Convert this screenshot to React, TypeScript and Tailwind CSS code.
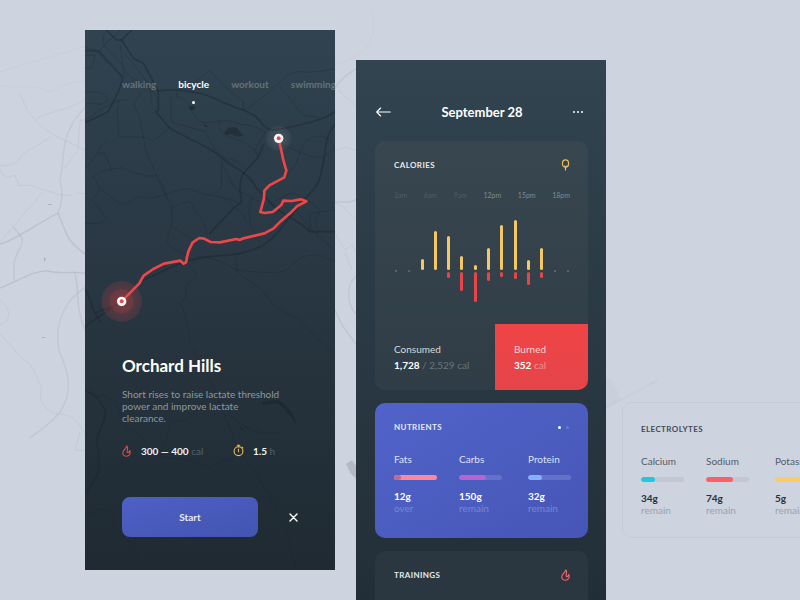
import React from "react";

function Flame({ className }: { className: string }) {
  return (
    <svg viewBox="0 0 9 12" className={className} fill="none" stroke="currentColor" strokeWidth="1.1" strokeLinejoin="round" aria-hidden="true">
      <path d="M4.8 .9C4.3 3 2.6 4 1.5 5.7C0 8.2 1.2 11.2 4.3 11.3C7.3 11.3 8.9 8.6 7.8 5.4C7.5 6.8 6.9 7.6 6 7.6C4.9 7.5 5 6.4 5.3 5.2C5.7 3.6 5.6 2.1 4.8 .9Z" />
    </svg>
  );
}

function Timer() {
  return (
    <svg viewBox="0 0 11 13" className="h-[13px] w-[11px] text-[#eebd5b]" fill="none" stroke="currentColor" strokeWidth="1.1" aria-hidden="true">
      <circle cx="5.5" cy="7.2" r="4.4" />
      <path d="M4.3 1.3H6.7M5.5 1.3V2.8M5.5 5V7.8M9 3.2L9.8 4" strokeLinecap="round" />
    </svg>
  );
}

function Pin() {
  return (
    <svg viewBox="0 0 9 12" className="h-3 w-[9px] text-[#eebd5b]" fill="none" stroke="currentColor" strokeWidth="1.2" strokeLinecap="round" aria-hidden="true">
      <ellipse cx="4.5" cy="4.5" rx="3.1" ry="3.7" />
      <path d="M4.5 8.2V11M3.6 7.2L4.5 8.2L5.4 7.2" />
    </svg>
  );
}

const minorRoads = [
  "M60 90C80 60 110 50 120 30M15 82C50 90 60 100 80 130M75 40C50 80 110 100 135 150C160 190 190 180 235 235M120 70L132 165M132 100C160 130 180 160 200 185C210 200 215 220 212 250",
  "M15 105H45C40 130 45 150 15 145M15 218C60 210 90 230 80 245C60 265 30 240 15 252M15 300C60 270 100 240 140 238M185 212L162 252L180 300L190 350L220 362L268 325M115 240L112 285L116 350L190 352",
  "M15 440C30 450 60 370 80 362M190 352L200 400L262 540M55 398L75 400L95 452M40 470C60 450 90 448 125 443C160 455 195 475 232 467M40 470L60 505L37 540L80 595L60 610H15M60 505C80 520 110 548 130 552C160 545 165 530 185 528C220 550 280 505 330 506C370 530 440 525 485 555",
  "M270 230C280 250 265 290 278 308C330 320 350 330 370 332C390 350 400 395 428 410C455 420 470 415 490 445M290 218V230C340 235 330 300 370 308C460 300 440 300 470 310L525 320L560 338M415 303C415 350 450 350 478 362C500 370 520 380 530 405M555 338L525 388L535 412",
  "M340 190L390 151L425 192L490 245V270M490 270C520 260 540 235 570 215C600 180 630 155 660 155C700 160 730 150 764 147M600 202L640 245C660 290 680 290 708 290L715 300M764 385C740 330 700 350 680 360C650 400 655 440 632 450M600 375C650 385 690 420 730 412C745 400 755 390 764 385M632 450C610 490 590 490 568 496M425 415V500L405 520",
  "M240 480L275 560V615C265 635 260 660 265 675C285 690 305 700 325 710M275 565C310 545 330 540 335 548C345 590 370 580 380 640M275 620C300 630 320 650 340 660M425 430C440 450 450 490 470 510C500 520 520 540 550 550M440 540C450 560 490 570 500 605M515 535C505 560 505 590 515 620L540 670",
  "M560 560C590 540 620 520 640 520C680 540 715 555 718 580C700 600 710 625 715 650M690 635L690 580L764 570M640 560C680 610 700 640 740 670L764 690M350 710C390 710 430 725 470 750C520 755 560 760 600 757C640 750 640 710 690 706H720L764 725M470 750L468 715L485 700",
  "M470 750C500 790 540 790 565 835C590 870 620 885 655 892C680 930 720 960 764 1005M320 720L348 765C320 790 320 800 316 830L303 848L316 890L330 950C327 970 345 990 350 1010C380 1060 400 1090 420 1150L470 1280C520 1350 560 1410 580 1450C610 1500 630 1580 650 1650",
  "M45 1135L70 1125L95 1140C130 1170 130 1230 160 1235C195 1240 190 1290 240 1308C290 1320 340 1315 390 1345L420 1325L460 1315M240 1308L275 1205L320 1200L370 1150M430 1160C450 1200 530 1245 570 1240L598 1235M15 1480H35L60 1465L95 1480C100 1540 150 1550 170 1600L200 1650",
];

const mainRoads = [
  "M125 60L160 115L190 130C210 165 225 195 235 215V270L228 276L270 325C310 350 380 375 425 412C465 450 500 450 530 505L560 535C590 580 660 600 690 635H764",
  "M78 30L110 60H125L155 30M235 213C290 205 330 215 370 222C420 240 450 260 490 270C520 285 535 290 548 315L570 330C600 330 620 325 660 315C700 305 740 295 764 275",
  "M15 92H55L90 130L128 172C120 220 95 250 85 275L15 308M550 375L535 412L490 460C475 490 480 520 485 545L460 565L390 640M764 315C730 350 740 400 725 450C715 510 700 500 640 580C590 635 580 680 480 700C430 710 370 705 320 725C280 735 230 765 190 780C160 800 130 840 100 860L15 920",
  "M15 810C40 840 30 860 45 880L60 905M45 880L95 860M15 1110L50 1130L78 1175C70 1230 40 1240 55 1290V1360L15 1425",
];

function TrailMap() {
  return (
    <svg viewBox="85 30 250 540" preserveAspectRatio="xMidYMin slice" className="absolute inset-0 h-full w-full" role="img" aria-label="Trail map">
      <defs>
        <radialGradient id="halo">
          <stop offset="0" stopColor="#ffffff" stopOpacity="0.14" />
          <stop offset="1" stopColor="#ffffff" stopOpacity="0.03" />
        </radialGradient>
        <radialGradient id="pulse">
          <stop offset="0" stopColor="#ef4444" stopOpacity="0.32" />
          <stop offset="1" stopColor="#ef4444" stopOpacity="0.14" />
        </radialGradient>
      </defs>
      <g transform="translate(80 20) scale(.33333)" fill="none" strokeLinejoin="round" strokeLinecap="round">
        <g stroke="#1b252d" strokeOpacity="0.28" strokeWidth="3">
          {minorRoads.map((d) => <path key={d} d={d} />)}
        </g>
        <g stroke="#18222a" strokeOpacity="0.4" strokeWidth="5">
          {mainRoads.map((d) => <path key={d} d={d} />)}
        </g>
        <g fill="#18222a" fillOpacity="0.5">
          <path d="M432 338L446 323L468 321L490 347L470 350L455 342L440 345Z" />
          <ellipse cx="336" cy="263" rx="9" ry="6" />
          <path d="M545 1145L595 1140C630 1160 645 1190 650 1215C625 1180 605 1158 590 1150L550 1155ZM475 1213L495 1235L485 1230ZM370 310L386 322L375 320Z" />
        </g>
        <circle cx="596" cy="355" r="38" fill="url(#halo)" />
        <circle cx="125" cy="844" r="61" fill="url(#pulse)" />
        <circle cx="125" cy="844" r="36" fill="#ef4444" fillOpacity="0.14" />
        <path
          d="M596 355L610 420L619 452L613 472L568 496L553 512L552 535L541 576L553 579L578 576L604 555L610 542L635 543L662 538L679 544L652 558L630 580L604 602L580 626L553 640L490 655L479 660L469 657L420 667L392 666L372 656L358 654L338 667L326 692L320 715L319 726L311 731L301 722L252 731L220 747L191 767L178 790L125 844"
          stroke="#ef4649"
          strokeWidth="8"
        />
        <g fill="#ffffff">
          <circle cx="596" cy="355" r="14" />
          <circle cx="125" cy="844" r="14" />
        </g>
        <g fill="#ef4649">
          <circle cx="596" cy="355" r="6" />
          <circle cx="125" cy="844" r="6" />
        </g>
      </g>
    </svg>
  );
}

function Backdrop() {
  return (
    <svg viewBox="0 0 800 600" preserveAspectRatio="xMinYMin slice" className="absolute inset-0 h-full w-full" aria-hidden="true">
      <g fill="none" stroke="#a9adb9">
        <g strokeOpacity="0.24">
          <path strokeOpacity="0.12" d="M0 72C30 62 60 55 88 45M0 85C20 90 30 82 50 92C65 85 75 80 88 82" />
          <path d="M20 93L27 110L37 122C50 137 70 140 90 154M0 166C25 165 15 155 35 147L52 136M37 119C50 110 80 110 90 92M0 170L5 178L15 175L19 186L30 185C45 190 60 197 72 195M63 170L78 150L80 120L90 120M75 193L90 194M43 192L0 242" />
          <path d="M0 300C10 308 13 320 0 325M0 334L22 358L31 365L42 388L40 397C45 410 50 413 60 414C75 415 80 425 86 435M80 432L75 450L86 450" />
          <path strokeOpacity="0.12" d="M334 65C350 60 385 50 370 5" />
          <path d="M334 152C345 145 350 148 358 152M338 90L358 108M334 232L345 250L352 245L358 255M345 252L352 270M334 202L345 208L355 220" />
        </g>
        <g strokeWidth="1.4" strokeOpacity="0.45">
          <path d="M0 244C15 240 35 225 58 213L64 228C70 245 80 250 90 258M0 288C20 280 35 270 48 271C65 275 75 270 90 274" />
          <path strokeOpacity="0.3" d="M58 213C63 200 63 190 60 180C64 160 62 145 70 128C75 118 82 110 90 102M90 285C60 300 55 330 59 350C67 370 75 390 60 412C50 425 40 430 30 438M334 90C340 78 350 72 358 68" />
          <path strokeOpacity="0.34" d="M13 227C30 245 20 240 14 263L14 280M75 272C80 300 75 300 82 322L90 342M334 202L350 202L358 199M334 308L342 325L358 347M358 275C345 282 346 308 358 315" />
        </g>
      </g>
      <path d="M346 464L352 460L358 469V480L351 474Z" fill="#aeb3be" fillOpacity="0.8" />
      <path d="M44 257L46 259L44 262ZM48 204H52V205H48ZM42 337H45V338H42Z" fill="#aeb3be" />
      <path d="M606 380L611 379L621 399L606 408Z" fill="#bcc4d0" fillOpacity="0.25" />
      <path d="M606 408C628 396 640 390 658 380" fill="none" stroke="#bcc4d0" strokeOpacity="0.3" strokeWidth="2" />
    </svg>
  );
}

const bars = [
  { hour: 3, up: 0, down: 0 },
  { hour: 4, up: 0, down: 0 },
  { hour: 5, up: 11, down: 0 },
  { hour: 6, up: 39, down: 0 },
  { hour: 7, up: 34, down: 6 },
  { hour: 8, up: 14, down: 19 },
  { hour: 9, up: 5, down: 30 },
  { hour: 10, up: 22, down: 9 },
  { hour: 11, up: 45, down: 5 },
  { hour: 12, up: 50, down: 7 },
  { hour: 13, up: 10, down: 13 },
  { hour: 14, up: 22, down: 6 },
  { hour: 15, up: 0, down: 0 },
  { hour: 16, up: 0, down: 0 },
];

function CalorieChart() {
  return (
    <div className="flex justify-between" role="img" aria-label="Calories by hour">
      {bars.map((bar) => (
        <div key={bar.hour} className="flex w-[3px] flex-col items-center">
          <div className="flex h-[51px] w-full items-end">
            <div className="w-full rounded-full bg-[#f5c765]" style={{ height: bar.up }} />
          </div>
          {bar.up === 0 ? (
            <div className="size-[2px] rounded-full bg-[#64717a]" />
          ) : (
            <div className="h-[2px]" />
          )}
          <div className="h-[30px] w-full">
            <div className="w-full rounded-full bg-[#ea4348]" style={{ height: bar.down }} />
          </div>
        </div>
      ))}
    </div>
  );
}

interface Level {
  name: string;
  amount: string;
  note: string;
  track: string;
  fill: string;
}

const nutrients: Level[] = [
  { name: "Fats", amount: "12g", note: "over", track: "bg-[#ff8799]", fill: "w-[7px] bg-[#bd6c90]" },
  { name: "Carbs", amount: "150g", note: "remain", track: "bg-[#6471c9]", fill: "w-[27px] bg-[#b863cf]" },
  { name: "Protein", amount: "32g", note: "remain", track: "bg-[#6471c9]", fill: "w-[14px] bg-[#83b3ff]" },
];

const electrolytes: Level[] = [
  { name: "Calcium", amount: "34g", note: "remain", track: "bg-[#c2c7d3]", fill: "w-[14px] bg-[#20c9dd]" },
  { name: "Sodium", amount: "74g", note: "remain", track: "bg-[#c2c7d3]", fill: "w-[27px] bg-[#fa6167]" },
  { name: "Potassium", amount: "5g", note: "remain", track: "bg-[#c2c7d3]", fill: "w-[43px] bg-[#fdcb66]" },
];

function Levels({ items, noteClass, amountClass, nameClass }: { items: Level[]; noteClass: string; amountClass: string; nameClass: string }) {
  return (
    <div className="mt-5 grid grid-cols-[65px_69px_auto]">
      {items.map((item) => (
        <div key={item.name} className="text-[10px] leading-3">
          <div className={nameClass}>{item.name}</div>
          <div className={`mt-[10px] h-[5px] w-[43px] overflow-hidden rounded-full ${item.track}`}>
            <div className={`h-full rounded-full ${item.fill}`} />
          </div>
          <div className={`mt-[10px] font-bold ${amountClass}`}>{item.amount}</div>
          <div className={noteClass}>{item.note}</div>
        </div>
      ))}
    </div>
  );
}

const hours = [
  { label: "3am", past: true },
  { label: "6am", past: true },
  { label: "9am", past: true },
  { label: "12pm", past: false },
  { label: "15pm", past: false },
  { label: "18pm", past: false },
];

const activities = ["walking", "bicycle", "workout", "swimming"];

function TrailScreen() {
  return (
    <section className="relative mt-[30px] flex h-[540px] w-[250px] shrink-0 flex-col overflow-hidden bg-linear-to-b from-[#304350] via-[#283641] to-[#1f2a32] pl-[37px]">
      <TrailMap />
      <nav className="relative mt-12 flex gap-[22px] text-[10px] leading-3 font-bold">
        {activities.map((name) => (
          <button key={name} className={name === "bicycle" ? "flex flex-col items-center text-white" : "flex flex-col items-center text-[#65727b]"}>
            {name}
            {name === "bicycle" && <span className="mt-[11px] size-[3px] rounded-full bg-white" />}
          </button>
        ))}
      </nav>
      <div className="relative mt-auto pb-[33px]">
        <h1 className="text-[17px] leading-5 font-bold text-white">Orchard Hills</h1>
        <p className="mt-3 w-[160px] text-[10px] leading-3 text-[#8f989e]">
          Short rises to raise lactate threshold power and improve lactate clearance.
        </p>
        <div className="mt-5 flex h-[13px] items-center text-[10px] leading-3 text-[#56626a]">
          <Flame className="h-3 w-[9px] text-[#e5484b]" />
          <span className="w-[93px] pl-[10px]"><b className="text-[#f2f4f5]">300 — 400</b> cal</span>
          <span className="ml-[9px]"><Timer /></span>
          <span className="pl-[9px]"><b className="text-[#f2f4f5]">1.5</b> h</span>
        </div>
        <div className="mt-10 flex items-center">
          <button className="h-10 w-[136px] rounded-lg bg-linear-to-br from-[#4e60c5] to-[#4354b1] text-[10px] font-bold text-[#e8eaf8]">Start</button>
          <button aria-label="Close" className="ml-[31px] size-[9px] text-white">
            <svg viewBox="0 0 9 9" fill="none" stroke="currentColor" strokeWidth="1.4" strokeLinecap="round"><path d="M1 1L8 8M8 1L1 8" /></svg>
          </button>
        </div>
      </div>
    </section>
  );
}

const cardTitle = "text-[8px] leading-3 font-bold tracking-[0.4px]";

function DayScreen() {
  return (
    <section className="relative mt-[60px] ml-[21px] flex h-[640px] w-[250px] shrink-0 flex-col bg-linear-to-b from-[#314450] via-[#25323c] via-70% to-[#1f2a32] pr-[18px] pl-[19px]">
      <header className="mt-[42px] flex h-5 items-center justify-between text-white">
        <button aria-label="Back" className="ml-px">
          <svg viewBox="0 0 15 10" className="h-[10px] w-[15px]" fill="none" stroke="currentColor" strokeWidth="1.1" strokeLinecap="round" strokeLinejoin="round"><path d="M14.3 5H.8M4.6 1L.7 5L4.6 9" /></svg>
        </button>
        <h2 className="text-[13px] leading-5 font-bold">September 28</h2>
        <button aria-label="More options" className="mr-[5px] flex gap-[2px]">
          <span className="size-[2px] rounded-full bg-white" />
          <span className="size-[2px] rounded-full bg-white" />
          <span className="size-[2px] rounded-full bg-white" />
        </button>
      </header>

      <article className="mt-[19px] overflow-hidden rounded-[10px] bg-linear-to-b from-[#38464f] to-[#303d46]">
        <div className="px-[18px] pt-[18px] pl-[19px]">
          <div className="flex items-center justify-between">
            <h3 className={`${cardTitle} text-[#e6e9eb]`}>CALORIES</h3>
            <Pin />
          </div>
          <div className="mt-[18px] flex justify-between text-[7px] leading-3">
            {hours.map((hour) => (
              <span key={hour.label} className={hour.past ? "text-[#4f5d66]" : "text-[#7f8a92]"}>{hour.label}</span>
            ))}
          </div>
          <div className="mt-[18px]">
            <CalorieChart />
          </div>
        </div>
        <div className="mt-[22px] flex text-[10px] leading-3">
          <div className="flex-1 pt-[19px] pb-[19px] pl-[19px] text-[#68757d]">
            <div className="text-[#d6dadc]">Consumed</div>
            <div className="mt-1"><b className="text-white">1,728</b> / 2,529 cal</div>
          </div>
          <div className="w-[93px] bg-linear-to-b from-[#f04446] to-[#e44549] pt-[19px] pb-[19px] pl-[19px] text-[#f49092]">
            <div className="text-[#fad4d4]">Burned</div>
            <div className="mt-1"><b className="text-white">352</b> cal</div>
          </div>
        </div>
      </article>

      <article className="mt-[13px] h-[135px] rounded-[10px] bg-linear-to-br from-[#5163ca] via-[#4c5dc0] to-[#4655b6] px-[19px] pt-[18px]">
        <div className="flex items-center justify-between">
          <h3 className={`${cardTitle} text-[#e6e9fa]`}>NUTRIENTS</h3>
          <div className="flex gap-[5px] text-white">
            <span className="size-[3px] rounded-full bg-white" />
            <span className="size-[3px] rounded-full bg-[#6b78d0]" />
          </div>
        </div>
        <Levels items={nutrients} nameClass="text-[#dfe3f8]" amountClass="text-white" noteClass="text-[#7986d4]" />
      </article>

      <article className="mt-[13px] flex-1 rounded-t-[10px] bg-[#2b3740] px-[18px] pt-[18px] pl-[19px]">
        <div className="flex items-center justify-between">
          <h3 className={`${cardTitle} text-[#e6e9eb]`}>TRAININGS</h3>
          <Flame className="h-3 w-[9px] text-[#f2686a]" />
        </div>
      </article>
    </section>
  );
}

export default function App() {
  return (
    <main className="relative flex h-screen items-start overflow-hidden bg-[#cdd4df] pl-[85px] font-['Lato','Liberation_Sans',sans-serif]">
      <Backdrop />
      <TrailScreen />
      <DayScreen />
      <article className="relative mt-[402px] ml-4 h-[136px] w-[212px] shrink-0 rounded-[10px] border border-[#c5cbd7] bg-[#cdd4df] px-[18px] pt-5">
        <h3 className={`${cardTitle} text-[#434b57]`}>ELECTROLYTES</h3>
        <Levels items={electrolytes} nameClass="text-[#535b68]" amountClass="text-[#28313b]" noteClass="text-[#9aa1ac]" />
      </article>
    </main>
  );
}
